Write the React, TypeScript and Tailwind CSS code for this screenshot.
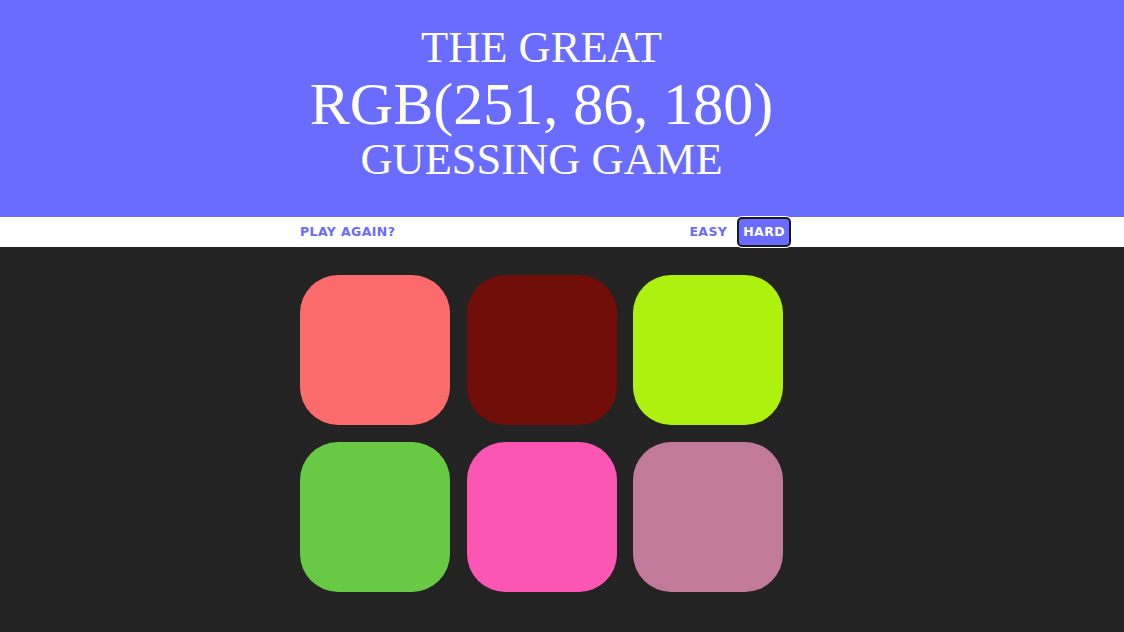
import React, { useState } from 'react';

const colors = ['#fb6b6b', '#700d08', '#aef00e', '#68ca44', '#fb56b4', '#c27a9b'];

const App = () => {
  const [mode, setMode] = useState<'easy' | 'hard'>('hard');

  return (
    <div className="min-h-[632px] bg-[#232323]">
      <header className="h-[217px] bg-[#6a6bff] pt-[19px] text-center text-white font-['Liberation_Serif',serif] pr-[41px]">
        <div className="text-[44.5px] leading-[56px]">THE GREAT</div>
        <div className="text-[60px] leading-[59px]">RGB(251, 86, 180)</div>
        <div className="text-[44.5px] leading-[51px]">GUESSING GAME</div>
      </header>

      <nav className="h-[30px] bg-white">
        <div className="ml-[300px] flex h-full w-[491px] items-center font-['DejaVu_Sans',sans-serif] text-[12.5px] font-bold tracking-[0.4px] text-[#6a6bff]">
          <button className="h-full">PLAY AGAIN?</button>
          <div className="ml-auto flex h-full items-center gap-[4px]">
            <button
              onClick={() => setMode('easy')}
              className={`h-full rounded-[5px] border-2 px-[4px] ${mode === 'easy' ? 'border-[#1a1a1a] bg-[#6a6bff] text-white ring-1 ring-white' : 'border-transparent'}`}
            >
              EASY
            </button>
            <button
              onClick={() => setMode('hard')}
              className={`h-full rounded-[5px] border-2 px-[4px] ${mode === 'hard' ? 'border-[#1a1a1a] bg-[#6a6bff] text-white ring-1 ring-white' : 'border-transparent'}`}
            >
              HARD
            </button>
          </div>
        </div>
      </nav>

      <main className="ml-[300px] grid w-[483px] grid-cols-3 gap-x-[16.5px] gap-y-[17px] pt-[28px]">
        {(mode === 'hard' ? colors : colors.slice(0, 3)).map((c) => (
          <div key={c} className="h-[150px] w-[150px] rounded-[38px]" style={{ backgroundColor: c }} />
        ))}
      </main>
    </div>
  );
};

export default App;
